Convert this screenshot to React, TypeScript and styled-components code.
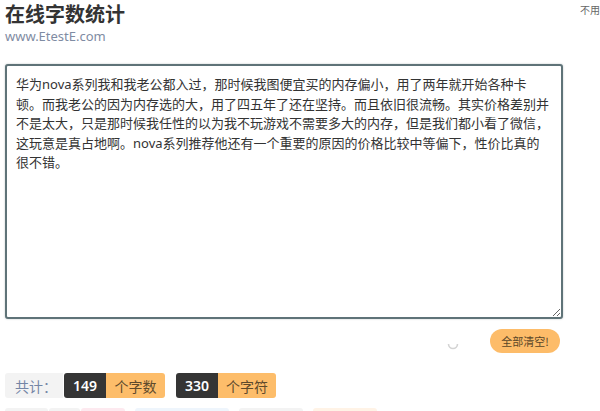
import styled, { createGlobalStyle } from "styled-components";

const GlobalStyle = createGlobalStyle`
  html, body {
    margin: 0;
    padding: 0;
    background: #ffffff;
    overflow: hidden;
  }
  body {
    font-family: "Noto Sans", "Noto Sans CJK SC", sans-serif;
    color: #333333;
  }
`;

const Page = styled.div`
  width: 600px;
  height: 411px;
  padding: 0 0 0 5px;
  box-sizing: border-box;
  overflow: hidden;
`;

const Header = styled.header`
  display: flex;
  justify-content: space-between;
  align-items: flex-start;
`;

const Brand = styled.div`
  display: flex;
  flex-direction: column;
`;

const Title = styled.h1`
  margin: 0;
  font-size: 20px;
  line-height: 28px;
  font-weight: 700;
  color: #333333;
  font-family: "Noto Sans CJK SC", sans-serif;
`;

const Site = styled.span`
  font-size: 13px;
  line-height: 17px;
  color: #7f8ca3;
`;

const Note = styled.span`
  margin-top: 3px;
  white-space: nowrap;
  font-size: 10px;
  line-height: 14px;
  color: #666666;
  font-family: "Noto Sans CJK SC", sans-serif;
`;

const Editor = styled.textarea`
  display: block;
  margin-top: 19px;
  width: 558px;
  height: 255px;
  box-sizing: border-box;
  padding: 9px 3px 9px 9px;
  border: 2px solid #5f7378;
  border-radius: 3px;
  box-shadow: 0 0 2px rgba(60, 80, 85, 0.35);
  outline: none;
  resize: both;
  font-family: "Noto Sans", "Noto Sans CJK SC", sans-serif;
  font-size: 13px;
  line-height: 19.5px;
  color: #333333;
  white-space: pre-wrap;
  caret-color: #333333;
`;

const Actions = styled.div`
  width: 558px;
  margin-top: 10px;
  padding-right: 3px;
  box-sizing: border-box;
  display: flex;
  justify-content: flex-end;
  align-items: center;
  gap: 31px;
`;

const Spinner = styled.svg`
  width: 12px;
  height: 12px;
  margin-top: 6px;
`;

const ClearButton = styled.button`
  width: 70px;
  height: 24px;
  border: none;
  border-radius: 12px;
  background: #fdbc69;
  color: #5a4628;
  font-size: 11px;
  font-family: "Noto Sans CJK SC", sans-serif;
  padding: 0;
  cursor: pointer;
`;

const Stats = styled.div`
  margin-top: 20px;
  display: flex;
  align-items: stretch;
  gap: 11px;
  height: 25px;
`;

const Label = styled.span`
  width: 58px;
  margin-right: -10px;
  display: flex;
  align-items: center;
  padding-left: 10px;
  box-sizing: border-box;
  background: #f3f3f3;
  border-radius: 3px 0 0 3px;
  color: #7486a6;
  font-size: 14px;
  font-family: "Noto Sans CJK SC", sans-serif;
`;

const Counter = styled.div`
  display: flex;
  border-radius: 3px;
  overflow: hidden;
`;

const Number = styled.span<{ $w: number }>`
  width: ${(p) => p.$w}px;
  display: flex;
  align-items: center;
  justify-content: center;
  background: #353535;
  color: #ffffff;
  font-size: 14px;
  font-weight: 600;
`;

const Unit = styled.span<{ $w: number }>`
  width: ${(p) => p.$w}px;
  display: flex;
  align-items: center;
  justify-content: center;
  background: #fdbd6a;
  color: #5e4a2c;
  font-size: 14px;
  font-family: "Noto Sans CJK SC", sans-serif;
`;

const Tags = styled.div`
  margin-top: 10px;
  display: flex;
  gap: 10px;
  height: 22px;
`;

const Tag = styled.span<{ $w: number; $bg: string }>`
  width: ${(p) => p.$w}px;
  background: ${(p) => p.$bg};
  border-radius: 3px;
`;

const TagGroup = styled.div`
  display: flex;
  gap: 1px;
`;

const text = [
  "华为nova系列我和我老公都入过，那时候我图便宜买的内存偏小，用了两年就开始各种卡",
  "顿。而我老公的因为内存选的大，用了四五年了还在坚持。而且依旧很流畅。其实价格差别并",
  "不是太大，只是那时候我任性的以为我不玩游戏不需要多大的内存，但是我们都小看了微信，",
  "这玩意是真占地啊。nova系列推荐他还有一个重要的原因的价格比较中等偏下，性价比真的",
  "很不错。",
].join("\n");

const App = () => {
  return (
    <Page>
      <GlobalStyle />
      <Header>
        <Brand>
          <Title>在线字数统计</Title>
          <Site>www.EtestE.com</Site>
        </Brand>
        <Note>不用</Note>
      </Header>
      <Editor defaultValue={text} spellCheck={false} />
      <Actions>
        <Spinner viewBox="0 0 12 12">
          <path d="M1.5 6 A4.5 4.5 0 0 0 10.5 6" fill="none" stroke="#d4d4d4" strokeWidth="1.6" />
        </Spinner>
        <ClearButton>全部清空!</ClearButton>
      </Actions>
      <Stats>
        <Label>共计：</Label>
        <Counter>
          <Number $w={42}>149</Number>
          <Unit $w={59}>个字数</Unit>
        </Counter>
        <Counter>
          <Number $w={42}>330</Number>
          <Unit $w={58}>个字符</Unit>
        </Counter>
      </Stats>
      <Tags>
        <TagGroup>
          <Tag $w={43} $bg="#f3f3f3" />
          <Tag $w={31} $bg="#f3f3f3" />
          <Tag $w={44} $bg="#fde9ef" />
        </TagGroup>
        <Tag $w={94} $bg="#eef5fc" />
        <Tag $w={64} $bg="#f3f3f3" />
        <Tag $w={64} $bg="#fff3e6" />
      </Tags>
    </Page>
  );
};

export default App;
